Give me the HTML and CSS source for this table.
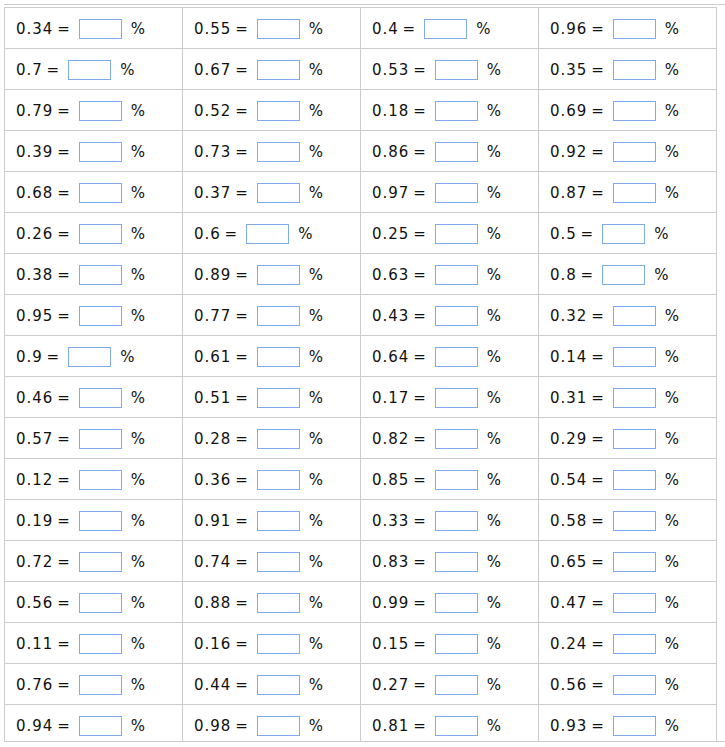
FILE: index.html
```html
<!DOCTYPE html>
<html>
<head>
<meta charset="utf-8">
<link rel="stylesheet" href="styles.css">
</head>
<body>
<div class="frame">
<table class="sheet">
<tbody>
<tr><td><span class="q">0.34 =</span><input class="ans"><span class="pct">%</span></td><td><span class="q">0.55 =</span><input class="ans"><span class="pct">%</span></td><td><span class="q">0.4 =</span><input class="ans"><span class="pct">%</span></td><td><span class="q">0.96 =</span><input class="ans"><span class="pct">%</span></td></tr>
<tr><td><span class="q">0.7 =</span><input class="ans"><span class="pct">%</span></td><td><span class="q">0.67 =</span><input class="ans"><span class="pct">%</span></td><td><span class="q">0.53 =</span><input class="ans"><span class="pct">%</span></td><td><span class="q">0.35 =</span><input class="ans"><span class="pct">%</span></td></tr>
<tr><td><span class="q">0.79 =</span><input class="ans"><span class="pct">%</span></td><td><span class="q">0.52 =</span><input class="ans"><span class="pct">%</span></td><td><span class="q">0.18 =</span><input class="ans"><span class="pct">%</span></td><td><span class="q">0.69 =</span><input class="ans"><span class="pct">%</span></td></tr>
<tr><td><span class="q">0.39 =</span><input class="ans"><span class="pct">%</span></td><td><span class="q">0.73 =</span><input class="ans"><span class="pct">%</span></td><td><span class="q">0.86 =</span><input class="ans"><span class="pct">%</span></td><td><span class="q">0.92 =</span><input class="ans"><span class="pct">%</span></td></tr>
<tr><td><span class="q">0.68 =</span><input class="ans"><span class="pct">%</span></td><td><span class="q">0.37 =</span><input class="ans"><span class="pct">%</span></td><td><span class="q">0.97 =</span><input class="ans"><span class="pct">%</span></td><td><span class="q">0.87 =</span><input class="ans"><span class="pct">%</span></td></tr>
<tr><td><span class="q">0.26 =</span><input class="ans"><span class="pct">%</span></td><td><span class="q">0.6 =</span><input class="ans"><span class="pct">%</span></td><td><span class="q">0.25 =</span><input class="ans"><span class="pct">%</span></td><td><span class="q">0.5 =</span><input class="ans"><span class="pct">%</span></td></tr>
<tr><td><span class="q">0.38 =</span><input class="ans"><span class="pct">%</span></td><td><span class="q">0.89 =</span><input class="ans"><span class="pct">%</span></td><td><span class="q">0.63 =</span><input class="ans"><span class="pct">%</span></td><td><span class="q">0.8 =</span><input class="ans"><span class="pct">%</span></td></tr>
<tr><td><span class="q">0.95 =</span><input class="ans"><span class="pct">%</span></td><td><span class="q">0.77 =</span><input class="ans"><span class="pct">%</span></td><td><span class="q">0.43 =</span><input class="ans"><span class="pct">%</span></td><td><span class="q">0.32 =</span><input class="ans"><span class="pct">%</span></td></tr>
<tr><td><span class="q">0.9 =</span><input class="ans"><span class="pct">%</span></td><td><span class="q">0.61 =</span><input class="ans"><span class="pct">%</span></td><td><span class="q">0.64 =</span><input class="ans"><span class="pct">%</span></td><td><span class="q">0.14 =</span><input class="ans"><span class="pct">%</span></td></tr>
<tr><td><span class="q">0.46 =</span><input class="ans"><span class="pct">%</span></td><td><span class="q">0.51 =</span><input class="ans"><span class="pct">%</span></td><td><span class="q">0.17 =</span><input class="ans"><span class="pct">%</span></td><td><span class="q">0.31 =</span><input class="ans"><span class="pct">%</span></td></tr>
<tr><td><span class="q">0.57 =</span><input class="ans"><span class="pct">%</span></td><td><span class="q">0.28 =</span><input class="ans"><span class="pct">%</span></td><td><span class="q">0.82 =</span><input class="ans"><span class="pct">%</span></td><td><span class="q">0.29 =</span><input class="ans"><span class="pct">%</span></td></tr>
<tr><td><span class="q">0.12 =</span><input class="ans"><span class="pct">%</span></td><td><span class="q">0.36 =</span><input class="ans"><span class="pct">%</span></td><td><span class="q">0.85 =</span><input class="ans"><span class="pct">%</span></td><td><span class="q">0.54 =</span><input class="ans"><span class="pct">%</span></td></tr>
<tr><td><span class="q">0.19 =</span><input class="ans"><span class="pct">%</span></td><td><span class="q">0.91 =</span><input class="ans"><span class="pct">%</span></td><td><span class="q">0.33 =</span><input class="ans"><span class="pct">%</span></td><td><span class="q">0.58 =</span><input class="ans"><span class="pct">%</span></td></tr>
<tr><td><span class="q">0.72 =</span><input class="ans"><span class="pct">%</span></td><td><span class="q">0.74 =</span><input class="ans"><span class="pct">%</span></td><td><span class="q">0.83 =</span><input class="ans"><span class="pct">%</span></td><td><span class="q">0.65 =</span><input class="ans"><span class="pct">%</span></td></tr>
<tr><td><span class="q">0.56 =</span><input class="ans"><span class="pct">%</span></td><td><span class="q">0.88 =</span><input class="ans"><span class="pct">%</span></td><td><span class="q">0.99 =</span><input class="ans"><span class="pct">%</span></td><td><span class="q">0.47 =</span><input class="ans"><span class="pct">%</span></td></tr>
<tr><td><span class="q">0.11 =</span><input class="ans"><span class="pct">%</span></td><td><span class="q">0.16 =</span><input class="ans"><span class="pct">%</span></td><td><span class="q">0.15 =</span><input class="ans"><span class="pct">%</span></td><td><span class="q">0.24 =</span><input class="ans"><span class="pct">%</span></td></tr>
<tr><td><span class="q">0.76 =</span><input class="ans"><span class="pct">%</span></td><td><span class="q">0.44 =</span><input class="ans"><span class="pct">%</span></td><td><span class="q">0.27 =</span><input class="ans"><span class="pct">%</span></td><td><span class="q">0.56 =</span><input class="ans"><span class="pct">%</span></td></tr>
<tr><td><span class="q">0.94 =</span><input class="ans"><span class="pct">%</span></td><td><span class="q">0.98 =</span><input class="ans"><span class="pct">%</span></td><td><span class="q">0.81 =</span><input class="ans"><span class="pct">%</span></td><td><span class="q">0.93 =</span><input class="ans"><span class="pct">%</span></td></tr>
</tbody>
</table>
</div>
</body>
</html>
```

FILE: styles.css
```css
html, body {
  margin: 0;
  padding: 0;
  background: #fff;
  overflow: hidden;
}
body {
  font-family: "DejaVu Sans", Verdana, sans-serif;
  font-size: 15px;
  color: #111;
}
.frame {
  margin: 4px 0 0 4px;
  width: 721px;
  height: 734px;
  border-top: 1px solid #cccccc;
  border-bottom: 1px solid #cccccc;
  padding-top: 2px;
  overflow: hidden;
  box-sizing: content-box;
}
.sheet {
  border-collapse: collapse;
  table-layout: fixed;
  width: 713px;
}
.sheet td {
  width: 178px;
  height: 41px;
  padding: 1px 0 0 11px;
  border: 1px solid #cccccc;
  white-space: nowrap;
  vertical-align: middle;
  box-sizing: border-box;
}
.q {
  letter-spacing: 1px;
  word-spacing: -2px;
}
.ans {
  display: inline-block;
  width: 43px;
  height: 20px;
  box-sizing: border-box;
  margin: 0 9px 0 8px;
  padding: 0;
  border: 1px solid #7eaaf0;
  background: #fff;
  vertical-align: middle;
  font-size: 13px;
}
.pct {
  letter-spacing: 1px;
}
```
